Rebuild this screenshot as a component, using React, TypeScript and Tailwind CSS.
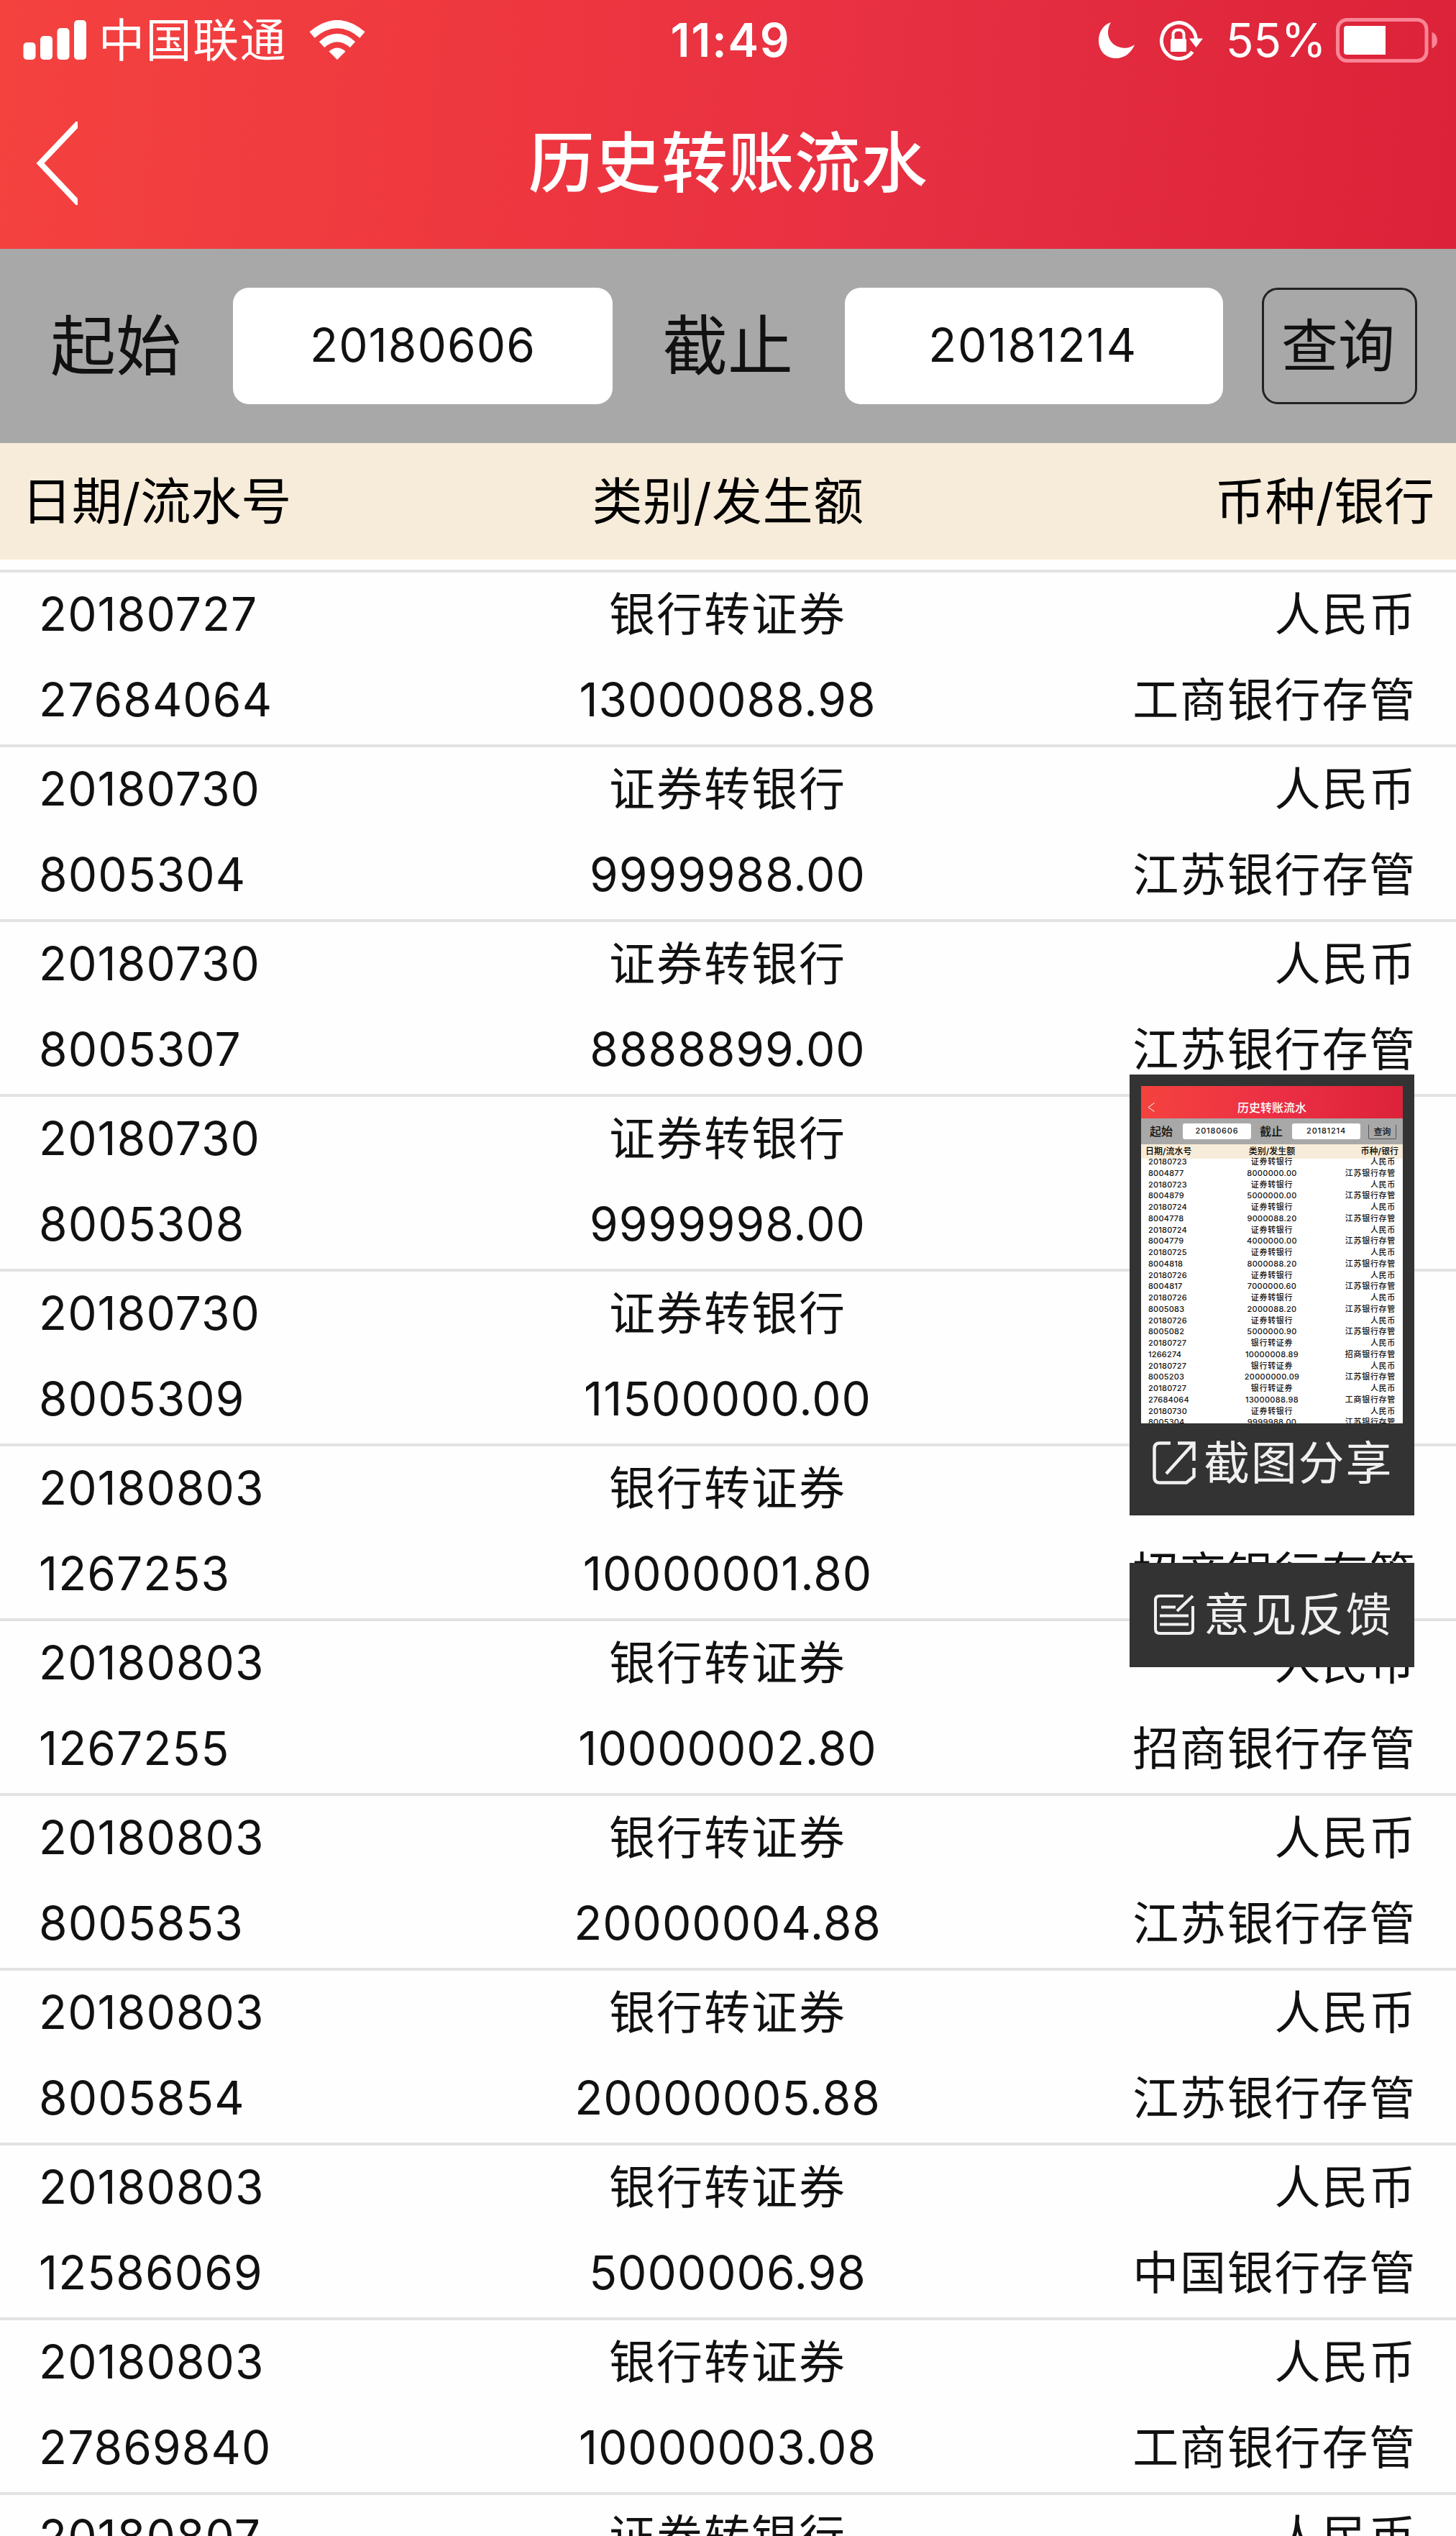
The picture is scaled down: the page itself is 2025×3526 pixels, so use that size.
import React from 'react';

type Transfer = {
  date: string;
  serial: string;
  kind: string;
  amount: string;
  bank: string;
};

const IN = '银行转证券';
const OUT = '证券转银行';

const transfers: Transfer[] = [
  { date: '20180727', serial: '27684064', kind: IN, amount: '13000088.98', bank: '工商银行存管' },
  { date: '20180730', serial: '8005304', kind: OUT, amount: '9999988.00', bank: '江苏银行存管' },
  { date: '20180730', serial: '8005307', kind: OUT, amount: '8888899.00', bank: '江苏银行存管' },
  { date: '20180730', serial: '8005308', kind: OUT, amount: '9999998.00', bank: '江苏银行存管' },
  { date: '20180730', serial: '8005309', kind: OUT, amount: '11500000.00', bank: '江苏银行存管' },
  { date: '20180803', serial: '1267253', kind: IN, amount: '10000001.80', bank: '招商银行存管' },
  { date: '20180803', serial: '1267255', kind: IN, amount: '10000002.80', bank: '招商银行存管' },
  { date: '20180803', serial: '8005853', kind: IN, amount: '20000004.88', bank: '江苏银行存管' },
  { date: '20180803', serial: '8005854', kind: IN, amount: '20000005.88', bank: '江苏银行存管' },
  { date: '20180803', serial: '12586069', kind: IN, amount: '5000006.98', bank: '中国银行存管' },
  { date: '20180803', serial: '27869840', kind: IN, amount: '10000003.08', bank: '工商银行存管' },
  { date: '20180807', serial: '8006012', kind: OUT, amount: '9999988.00', bank: '江苏银行存管' },
];

const previewTransfers: Transfer[] = [
  { date: '20180723', serial: '8004877', kind: OUT, amount: '8000000.00', bank: '江苏银行存管' },
  { date: '20180723', serial: '8004879', kind: OUT, amount: '5000000.00', bank: '江苏银行存管' },
  { date: '20180724', serial: '8004778', kind: OUT, amount: '9000088.20', bank: '江苏银行存管' },
  { date: '20180724', serial: '8004779', kind: OUT, amount: '4000000.00', bank: '江苏银行存管' },
  { date: '20180725', serial: '8004818', kind: OUT, amount: '8000088.20', bank: '江苏银行存管' },
  { date: '20180726', serial: '8004817', kind: OUT, amount: '7000000.60', bank: '江苏银行存管' },
  { date: '20180726', serial: '8005083', kind: OUT, amount: '2000088.20', bank: '江苏银行存管' },
  { date: '20180726', serial: '8005082', kind: OUT, amount: '5000000.90', bank: '江苏银行存管' },
  { date: '20180727', serial: '1266274', kind: IN, amount: '10000008.89', bank: '招商银行存管' },
  { date: '20180727', serial: '8005203', kind: IN, amount: '20000000.09', bank: '江苏银行存管' },
  { date: '20180727', serial: '27684064', kind: IN, amount: '13000088.98', bank: '工商银行存管' },
  { date: '20180730', serial: '8005304', kind: OUT, amount: '9999988.00', bank: '江苏银行存管' },
];

const StatusBar: React.FC = () => (
  <div className="flex h-[112px] items-center justify-between pl-[32px] pr-[25px]">
    <div className="flex flex-1 items-center">
      <svg width="88" height="56" viewBox="0 0 88 56" fill="#fff">
        <rect x="0.5" y="31" width="17" height="24" rx="5" />
        <rect x="24" y="22" width="17" height="33" rx="5" />
        <rect x="47.5" y="11" width="17" height="44" rx="5" />
        <rect x="71" y="0" width="17" height="55" rx="5" />
      </svg>
      <span className="ml-[17px] text-[64px] leading-[64px] tracking-[1.5px]">中国联通</span>
      <svg className="ml-[31px]" width="78" height="56" viewBox="0 0 78 56">
        <g fill="none" stroke="#fff" strokeWidth="11">
          <path d="M4 20.500Q39 -9.500 74 20.500" />
          <path d="M17.500 34Q39 15 60.500 34" />
        </g>
        <path d="M39 55L27.500 43.500Q39 33.500 50.500 43.500Z" fill="#fff" />
      </svg>
    </div>
    <span className="text-[64px] leading-[64px] font-semibold tracking-[1.8px]">11:49</span>
    <div className="flex flex-1 items-center justify-end">
      <svg width="50" height="50" viewBox="0 0 50 50" fill="#fff">
        <path d="M17 0C7 3 0 13 0 25C0 40 10 50 24 50C36 50 46 42 50 31C45 35 39 36.500 33 35.500C21 34 13 25 13 14C13 9 14.500 4 17 0Z" />
      </svg>
      <svg className="ml-[33px]" width="62" height="56" viewBox="0 0 62 56">
        <path d="M52.500 27A24 25 0 1 0 47.500 44" fill="none" stroke="#fff" strokeWidth="5" />
        <path d="M43 25.500H62L52.500 38Z" fill="#fff" />
        <rect x="17" y="26" width="22" height="18" rx="1.500" fill="#fff" />
        <path d="M20.500 28V20.500Q20.500 13.500 28 13.500Q35.500 13.500 35.500 20.500V28" fill="none" stroke="#fff" strokeWidth="4" />
      </svg>
      <span className="ml-[32px] text-[64px] leading-[64px] tracking-[-0.5px]">55%</span>
      <svg className="ml-[14px]" width="142" height="62" viewBox="0 0 142 62">
        <rect x="2.500" y="2.500" width="123.500" height="57" rx="13" fill="none" stroke="#f98595" strokeWidth="5" />
        <path d="M15 11H69V51H15Q11 51 11 47V15Q11 11 15 11Z" fill="#fff" />
        <path d="M133.500 19.500Q141 23 141 31Q141 39 133.500 42.500Z" fill="#f98595" />
      </svg>
    </div>
  </div>
);

const TitleBar: React.FC = () => (
  <div className="grid h-[234px] grid-cols-3 items-center pb-[4px]">
    <svg className="ml-[50px]" width="58" height="116" viewBox="0 0 58 116" fill="none" stroke="#fff" strokeWidth="8">
      <path d="M62 -1L6 58L62 117" />
    </svg>
    <h1 className="text-center text-[92px] leading-[92px] font-medium tracking-[0.6px] whitespace-nowrap">历史转账流水</h1>
  </div>
);

const FilterBar: React.FC = () => (
  <div className="flex h-[270px] items-center bg-[#a8a8a8] pl-[70px] text-[#111]">
    <label className="w-[254px] text-[91px] leading-[100px]">起始</label>
    <div className="flex h-[162px] w-[528px] items-center justify-center rounded-[22px] bg-white pb-[2px] text-[64px] tracking-[1.1px]">
      20180606
    </div>
    <label className="ml-[69px] w-[254px] text-[91px] leading-[100px]">截止</label>
    <div className="flex h-[162px] w-[526px] items-center justify-center rounded-[22px] bg-white pr-[3px] pb-[2px] text-[64px] tracking-[1.6px]">
      20181214
    </div>
    <button className="ml-[54px] h-[162px] w-[216px] rounded-[22px] border-[3px] border-[#222] pr-[4px] text-[79px] leading-[90px]">
      查询
    </button>
  </div>
);

const TransferRow: React.FC<{ item: Transfer }> = ({ item }) => (
  <div className="h-[243px] border-t-[4px] border-[#e2e2e2] pl-[54px] pr-[55px] text-[64px] leading-[119px] text-[#111]">
    <div className="-mt-[2px] grid grid-cols-3">
      <span className="tracking-[1.1px]">{item.date}</span>
      <span className="text-center tracking-[2px]">{item.kind}</span>
      <span className="text-right tracking-[1.8px]">人民币</span>
      <span className="tracking-[1.1px]">{item.serial}</span>
      <span className="text-center tracking-[1px]">{item.amount}</span>
      <span className="text-right tracking-[1.8px]">{item.bank}</span>
    </div>
  </div>
);

const ScreenPreview: React.FC = () => (
  <div className="h-[469px] w-[364px] overflow-hidden bg-white text-[#111]">
    <div className="grid h-[45px] grid-cols-3 items-end bg-linear-to-r from-[#f4423e] via-[#ec2f44] to-[#dc2239] pb-[7px] text-white">
      <svg className="mb-[2px] ml-[9px]" width="10" height="13" viewBox="0 0 10 13" fill="none" stroke="#fff">
        <path d="M9.500 0.500L1 6.500L9.500 12.500" />
      </svg>
      <span className="text-center text-[16px] leading-[16px] font-medium whitespace-nowrap">历史转账流水</span>
    </div>
    <div className="flex h-[36px] items-center bg-[#a8a8a8] pl-[12px] text-[16px] font-medium">
      <span className="w-[46px]">起始</span>
      <span className="h-[22px] w-[95px] rounded-[3px] bg-white text-center text-[11px] leading-[20px] tracking-[0.8px]">20180606</span>
      <span className="ml-[12px] w-[45px]">截止</span>
      <span className="h-[22px] w-[95px] rounded-[3px] bg-white text-center text-[11px] leading-[20px] tracking-[0.8px]">20181214</span>
      <span className="ml-[11px] h-[21px] w-[39px] rounded-[2px] border border-[#555] border-t-transparent text-center text-[12px] leading-[19px]">查询</span>
    </div>
    <div className="grid h-[20px] grid-cols-3 items-center bg-[#f7ecd9] px-[6px] text-[12px] font-medium text-black">
      <span>日期/流水号</span>
      <span className="text-center">类别/发生额</span>
      <span className="text-right">币种/银行</span>
    </div>
    <div className="-mt-[3px] px-[10px] text-[11px] leading-[15.75px] font-medium">
      {previewTransfers.map((t, i) => (
        <div key={i} className="grid grid-cols-3">
          <span className="tracking-[0.2px]">{t.date}</span>
          <span className="text-center tracking-[0.7px]">{t.kind}</span>
          <span className="text-right tracking-[0.7px]">人民币</span>
          <span className="tracking-[0.2px]">{t.serial}</span>
          <span className="text-center tracking-[0.3px]">{t.amount}</span>
          <span className="text-right tracking-[0.7px]">{t.bank}</span>
        </div>
      ))}
    </div>
  </div>
);

const App: React.FC = () => {
  return (
    <div className="relative h-[3526px] w-[2025px] overflow-hidden bg-[#fefefe] font-['Inter','Noto_Sans_CJK_SC',sans-serif]">
      <header className="h-[346px] bg-[linear-gradient(95deg,#f4423f_0%,#ed363f_38%,#e83043_60%,#db2238_100%)] text-white">
        <StatusBar />
        <TitleBar />
      </header>
      <FilterBar />
      <div className="mb-[14px] grid h-[162px] grid-cols-3 items-center bg-[#f7ecd9] pl-[30px] pr-[30px] pt-[2px] text-[70px] leading-[80px] text-black">
        <span>日期/流水号</span>
        <span className="text-center tracking-[0.5px]">类别/发生额</span>
        <span className="text-right">币种/银行</span>
      </div>
      {transfers.map((item, i) => (
        <TransferRow key={i} item={item} />
      ))}

      {/* Panels shown over the list after a screen capture */}
      <div className="absolute top-[1494px] left-[1571px] h-[613px] w-[396px] bg-[#333] px-[16px] pt-[16px] text-[#f0f0f0]">
        <ScreenPreview />
        <div className="flex items-center pt-[17px] pl-[16px]">
          <svg width="60" height="60" viewBox="0 0 60 60" fill="none" stroke="#f0f0f0" strokeWidth="4.500">
            <path d="M25 2.500H10Q2.500 2.500 2.500 10V50Q2.500 57.500 10 57.500H47L57.500 49V37" />
            <path d="M35 2.500H57.500V27M57 3L19 45" />
          </svg>
          <span className="ml-[11px] text-[64px] leading-[76px] tracking-[1.8px] whitespace-nowrap">截图分享</span>
        </div>
      </div>
      <div className="absolute top-[2173px] left-[1571px] flex h-[145px] w-[396px] items-center bg-[#333] pb-[2px] pl-[33px] text-[#f0f0f0]">
        <svg width="58" height="58" viewBox="0 0 58 58" fill="none" stroke="#f0f0f0" strokeWidth="4">
          <path d="M42 3H9Q3 3 3 9V49Q3 55 9 55H49Q55 55 55 49V17" />
          <path d="M55 3L33 24M11 18.500H31M9 30.500H49M9 42.500H49" />
        </svg>
        <span className="ml-[12px] text-[64px] leading-[76px] tracking-[1.8px] whitespace-nowrap">意见反馈</span>
      </div>
    </div>
  );
};

export default App;
